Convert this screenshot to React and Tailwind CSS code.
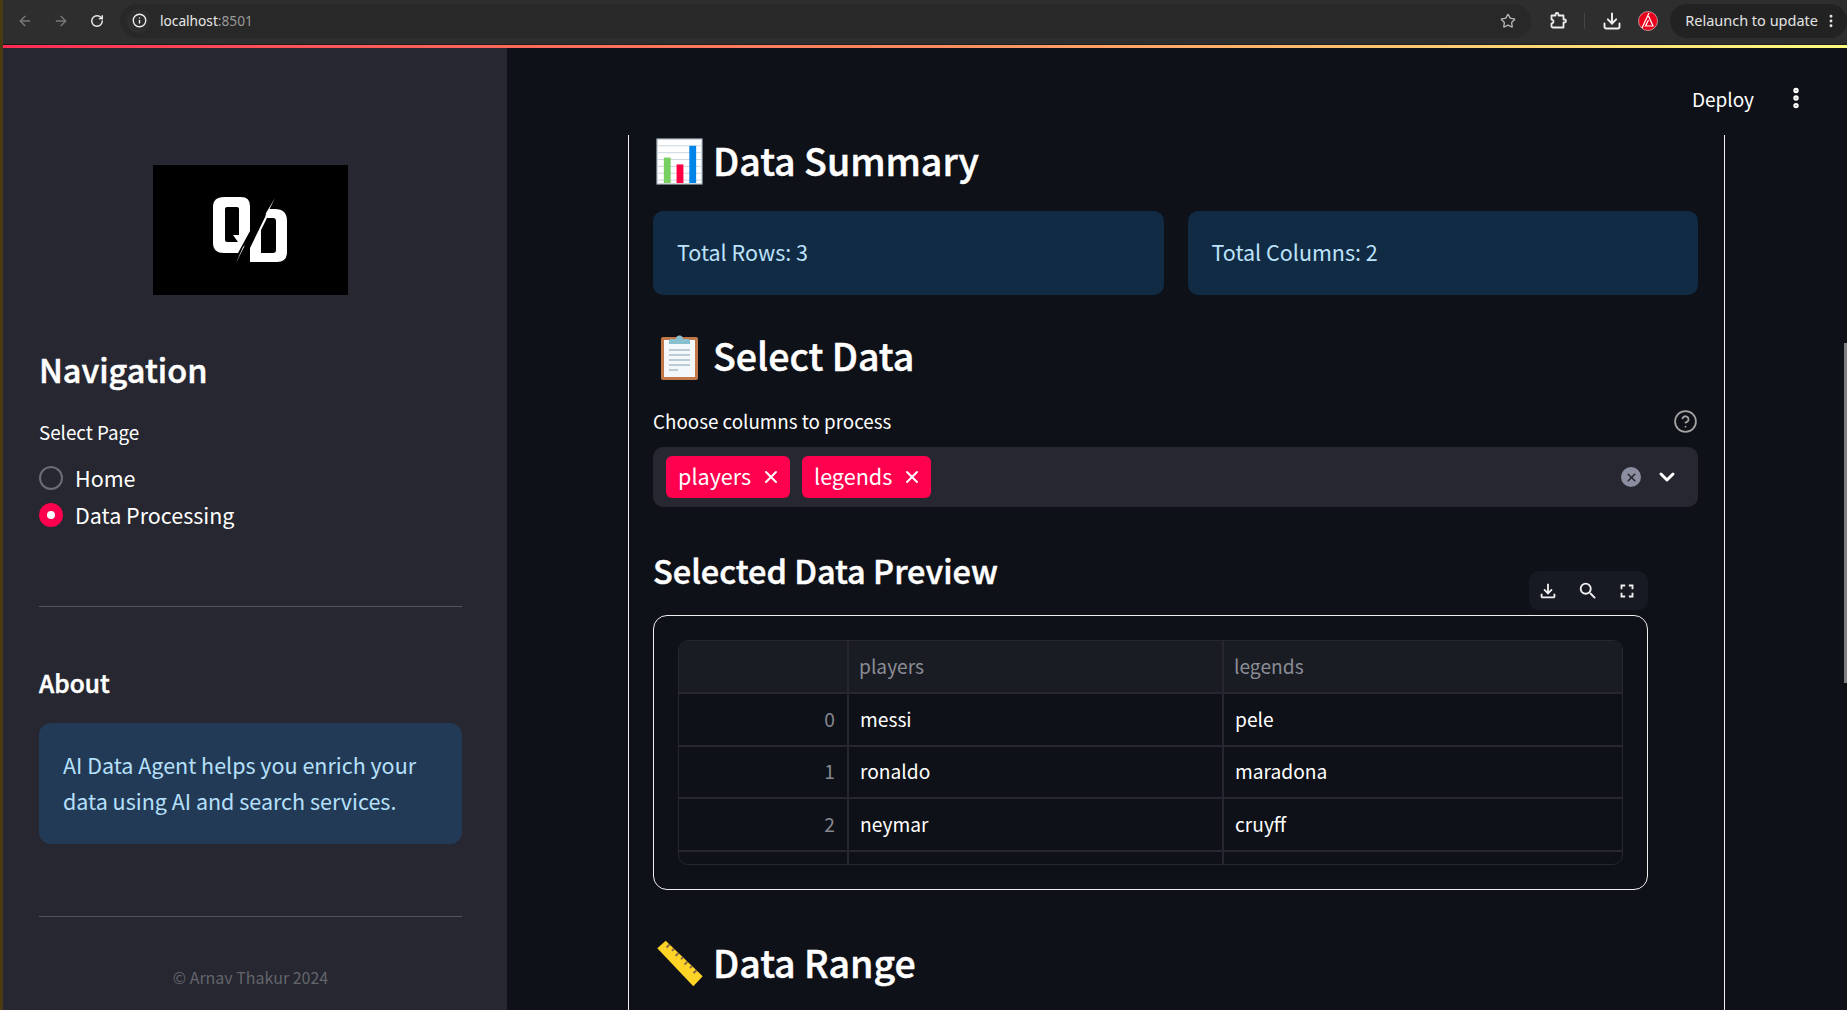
import { ArrowLeft, ArrowRight, RotateCw, Info, Star, Download, EllipsisVertical, X, ChevronDown, CircleHelp } from 'lucide-react';
import { MdOutlineFileDownload, MdSearch, MdFullscreen } from 'react-icons/md';

const FONT = '[font-family:"Noto_Sans_CJK_SC","Source_Sans_Pro",sans-serif]';

const ChartEmoji = () => (
  <svg width="47" height="47" viewBox="0 0 48 48" className="shrink-0">
    <rect x="1" y="1" width="46" height="46" fill="#fff" stroke="#a9b6bf" strokeWidth="1.2" />
    <path d="M2 8h44M2 15h44M2 22h44M2 29h44M2 36h44M2 43h44" stroke="#ccd6dd" strokeWidth="1" />
    <rect x="8" y="20" width="7" height="26" fill="#77d060" />
    <rect x="21" y="27" width="7" height="19" fill="#ff0044" />
    <rect x="34" y="8" width="7" height="38" fill="#0084e8" />
  </svg>
);

const ClipboardEmoji = () => (
  <div className="w-[47px] shrink-0 flex justify-center">
    <svg width="37" height="47" viewBox="0 0 37 47">
      <rect x="0" y="4" width="37" height="43" rx="2" fill="#c1794a" />
      <rect x="3" y="7" width="31" height="37" fill="#f5f8fa" />
      <path d="M8 17h21M8 22h21M8 27h21M8 32h21M8 37h9" stroke="#a9bdc9" strokeWidth="1.3" />
      <path d="M8 11V8a2 2 0 0 1 2-2h5a3.500 3.500 0 0 1 7 0h5a2 2 0 0 1 2 2v3z" fill="#88c0d0" />
    </svg>
  </div>
);

const RulerEmoji = () => (
  <svg width="47" height="47" viewBox="0 0 47 47" className="shrink-0">
    <path d="M1.300 8.300L9.700 0.700L46.700 36.300L37.300 46.300Z" fill="#ffd426" />
    <path d="M13.500 4.500l-3 3M18 8.800l-2 2M22.500 13l-3 3M27 17.300l-2 2M31.500 21.600l-3 3M36 26l-2 2M40.500 30.300l-3 3" stroke="#8a6a4a" strokeWidth="2" />
  </svg>
);

const Logo = () => (
  <svg width="195" height="130" viewBox="0 0 195 130" className="bg-black">
    <path
      fill="#fff"
      fillRule="evenodd"
      d="M71 32H88Q97 32 97 41V66L85 88H71Q60 88 60 78V42Q60 32 71 32ZM74 42Q72 42 72 44V75Q72 77 74 77H85L80 70H86V44Q86 42 84 42Z"
    />
    <path
      fill="#fff"
      fillRule="evenodd"
      d="M116 44H122Q134 44 134 56V87Q134 97 124 97H97V83ZM114 53L108 65V88H120Q123 88 123 85V56Q123 53 120 53Z"
    />
    <path fill="#fff" d="M122 33L113 48L112.500 52ZM83 98L90 82L92 80Z" />
  </svg>
);

const ExtensionIcon = () => (
  <svg width="17" height="17" viewBox="0 0 17 17" fill="none" stroke="#ececec" strokeWidth="1.8" strokeLinejoin="round">
    <path d="M1.500 3.500H5.500V2.500A1.500 1.500 0 0 1 8.500 2.500V3.500H13.500V7.500H14.500A1.500 1.500 0 0 1 14.500 10.500H13.500V15.500H3A1.500 1.500 0 0 1 1.500 14V11.500A2 2 0 0 0 1.500 7.500Z" />
  </svg>
);

// la fuente no tiene semibold: medium con un trazo fino
const H2 = ({ children, className = '' }) => (
  <h2 className={`font-medium text-white [-webkit-text-stroke:0.5px_#ffffff] ${className}`}>{children}</h2>
);

const Tag = ({ label, className }) => (
  <div className={`h-[42px] rounded-[6px] bg-[#ff004f] text-white text-[21.600px] flex items-center justify-between pl-[12px] pr-[9px] ${className}`}>
    <span className="leading-none -mt-[3px]">{label}</span>
    <X size={20} strokeWidth={2.4} />
  </div>
);

const ROWS = [
  ['0', 'messi', 'pele'],
  ['1', 'ronaldo', 'maradona'],
  ['2', 'neymar', 'cruyff'],
];

const DataTable = () => (
  <div className="h-[225px] rounded-[10px] border border-[#262730] overflow-hidden text-[19.200px] leading-none">
    <div className="h-[53px] bg-[#1a1c24] border-b-2 border-[#262730] grid grid-cols-[170px_375px_1fr] text-[#8b8d94]">
      <div className="border-r-2 border-[#262730]" />
      <div className="border-r-2 border-[#262730] px-[10px] flex items-center">players</div>
      <div className="px-[10px] flex items-center">legends</div>
    </div>
    {ROWS.map(r => (
      <div key={r[0]} className="h-[52.700px] border-b-2 border-[#262730] grid grid-cols-[170px_375px_1fr] text-white">
        <div className="border-r-2 border-[#262730] px-[12px] flex items-center justify-end text-[#85878e]">{r[0]}</div>
        <div className="border-r-2 border-[#262730] px-[11px] flex items-center">{r[1]}</div>
        <div className="px-[11px] flex items-center">{r[2]}</div>
      </div>
    ))}
    <div className="h-[12px] grid grid-cols-[170px_375px_1fr]">
      <div className="border-r-2 border-[#262730]" />
      <div className="border-r-2 border-[#262730]" />
    </div>
  </div>
);

const BrowserBar = () => (
  <div className="h-[45px] shrink-0 bg-[#2e2e2e] flex items-center pl-[14px] pb-[3px] text-[#e3e3e3] border-b border-[#1c1c1c]">
    <ArrowLeft size={16} className="text-[#7a7a7a]" />
    <ArrowRight size={16} className="text-[#7a7a7a] ml-[20px]" />
    <RotateCw size={14} strokeWidth={2.4} className="text-[#f0f0f0] ml-[21px]" />
    <div className="flex-1 h-[34px] ml-[16px] rounded-full bg-[#282828] flex items-center pl-[7px] pr-[15px] mr-[19px]">
      <div className="w-[24px] h-[24px] rounded-full bg-[#2e2e2e] flex items-center justify-center mr-[9px]">
        <Info size={15} strokeWidth={2.2} className="text-[#f0f0f0]" />
      </div>
      <span className="text-[13.700px] leading-none font-['Noto_Sans'] text-[#e8e8e8]">localhost<span className="text-[#9a9a9a]">:8501</span></span>
      <Star size={16} strokeWidth={2} className="ml-auto text-[#b5b5b5]" />
    </div>
    <ExtensionIcon />
    <div className="w-px h-[16px] bg-[#444] ml-[17px]" />
    <Download size={20} strokeWidth={2.3} className="text-[#f0f0f0] ml-[17px]" />
    <svg width="20" height="20" viewBox="0 0 20 20" className="ml-[16px]">
      <circle cx="10" cy="10" r="9.500" fill="#e8001c" stroke="#ffffff" strokeWidth="0.5" />
      <path d="M11 2L4 17M10.500 5l4.500 10H7.500l3-6" fill="none" stroke="#fff" strokeWidth="1.200" />
    </svg>
    <div className="h-[34px] ml-[12px] rounded-full bg-[#222222] flex items-center pl-[15px] pr-[8px] text-[14.500px] font-['Noto_Sans'] text-[#e3e3e3]">
      Relaunch to update
      <EllipsisVertical size={16} strokeWidth={2.4} className="ml-[5px]" />
    </div>
  </div>
);

const Sidebar = () => (
  <aside className="w-[504px] shrink-0 bg-[#262730] flex flex-col px-[36px] pt-[117px] text-white">
    <div className="w-[423px] flex justify-center"><Logo /></div>
    <H2 className="text-[32.500px] leading-none mt-[58px] h-[33px]">Navigation</H2>
    <div className="text-[18.800px] leading-none mt-[37px]">Select Page</div>
    <div className="mt-[23px] flex items-center text-[21.500px] leading-none h-[26px]">
      <span className="w-[24px] h-[24px] rounded-full border-2 border-[#6b6c74] mr-[12px]" />
      Home
    </div>
    <div className="mt-[11px] flex items-center text-[21.500px] leading-none h-[26px]">
      <span className="w-[24px] h-[24px] rounded-full bg-[#ff004f] mr-[12px] flex items-center justify-center">
        <span className="w-[8px] h-[8px] rounded-full bg-white" />
      </span>
      Data Processing
    </div>
    <div className="h-px bg-[#54555c] w-[423px] mt-[78px]" />
    <H2 className="text-[24.500px] leading-none mt-[64px] h-[28px]">About</H2>
    <div className="w-[423px] h-[121px] mt-[24px] rounded-[12px] bg-[#233a57] px-[24px] flex items-center text-[21.500px] leading-[36px] text-[#b5e0fb]">
      <p>AI Data Agent helps you enrich your data using AI and search services.</p>
    </div>
    <div className="h-px bg-[#54555c] w-[423px] mt-[72px]" />
    <div className="w-[423px] text-center text-[16px] leading-none text-[#64656c] mt-[52px]">© Arnav Thakur 2024</div>
  </aside>
);

const Main = () => (
  <main className="flex-1 min-w-0 bg-[#0e1117] flex flex-col relative">
    <div className="h-[87px] shrink-0 flex items-center justify-end pr-[38px] pt-[13px] text-white">
      <span className="text-[19px] leading-none mr-[29px]">Deploy</span>
      <EllipsisVertical size={26} strokeWidth={3} />
    </div>
    <div className="ml-[121px] w-[1097px] flex-1 border-x border-[#f0f0f0] px-[24px] min-h-0">
      <div className="flex items-center gap-[10px] ml-[3px] mt-[3px] h-[47px]">
        <ChartEmoji />
        <H2 className="text-[37.500px] leading-[1.2] pb-[5px]">Data Summary</H2>
      </div>
      <div className="grid grid-cols-2 gap-[24px] w-[1045px] mt-[26px]">
        <div className="h-[84px] rounded-[10px] bg-[#112b45] px-[24px] pb-[2px] flex items-center text-[21.500px] leading-none text-[#bde3fb]">Total Rows: 3</div>
        <div className="h-[84px] rounded-[10px] bg-[#112b45] px-[24px] pb-[2px] flex items-center text-[21.500px] leading-none text-[#bde3fb]">Total Columns: 2</div>
      </div>
      <div className="flex items-center gap-[10px] ml-[3px] mt-[38px] h-[47px]">
        <ClipboardEmoji />
        <H2 className="text-[37.500px] leading-[1.2] pb-[5px]">Select Data</H2>
      </div>
      <div className="flex items-center justify-between w-[1045px] mt-[29px] h-[24px] text-[18.800px] leading-none text-white">
        Choose columns to process
        <CircleHelp size={25} strokeWidth={1.700} className="text-[#a3a3a3] shrink-0" />
      </div>
      <div className="w-[1045px] h-[60px] mt-[14px] rounded-[10px] bg-[#262730] flex items-center px-[13px]">
        <Tag label="players" className="w-[124px]" />
        <Tag label="legends" className="w-[129px] ml-[12px]" />
        <div className="ml-auto flex items-center">
          <span className="w-[20px] h-[20px] rounded-full bg-[#8b8da0] flex items-center justify-center text-[#262730]">
            <X size={13} strokeWidth={3} />
          </span>
          <ChevronDown size={24} strokeWidth={3} className="text-white ml-[14px] mr-[6px]" />
        </div>
      </div>
      <div className="w-[995px] mt-[43px]">
        <div className="flex items-end justify-between h-[65px]">
          <H2 className="text-[32.500px] leading-[1.2] self-start">Selected Data Preview</H2>
          <div className="w-[119px] h-[39px] mb-[5px] rounded-[10px] bg-[#171a23] flex items-center justify-between pl-[8px] pr-[10px] text-[#f0f0f0]">
            <MdOutlineFileDownload size={22} />
            <MdSearch size={22} />
            <MdFullscreen size={22} />
          </div>
        </div>
        <div className="h-[275px] rounded-[14px] border border-[#f0f0f0] p-[24px]">
          <DataTable />
        </div>
      </div>
      <div className="flex items-center gap-[10px] ml-[3px] mt-[50px] h-[47px]">
        <RulerEmoji />
        <H2 className="text-[37.500px] leading-[1.2] pb-[5px]">Data Range</H2>
      </div>
    </div>
    <div className="absolute right-0 top-[295px] w-[3px] h-[340px] bg-[#7f7f7f]" />
  </main>
);

export default function App() {
  return (
    <div className={`h-screen w-full overflow-hidden flex bg-[#0e1117] ${FONT}`}>
      <div className="w-[3px] shrink-0 bg-[#4a3a12]" />
      <div className="flex-1 min-w-0 flex flex-col">
        <BrowserBar />
        <div className="h-[3px] shrink-0 bg-gradient-to-r from-[#ff2b55] via-[#ff8a60] to-[#fffd80]" />
        <div className="flex-1 min-h-0 flex">
          <Sidebar />
          <Main />
        </div>
      </div>
    </div>
  );
}
